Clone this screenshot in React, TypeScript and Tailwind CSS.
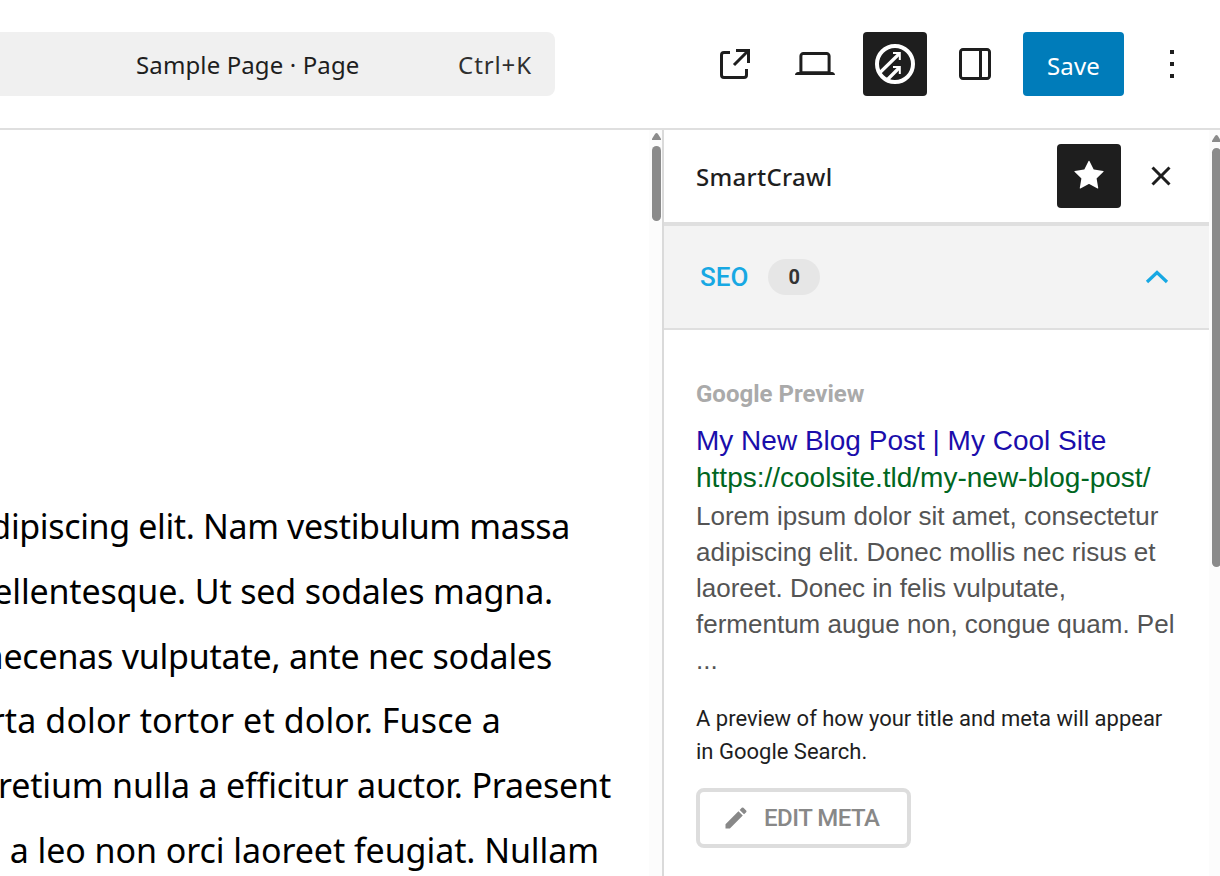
import type {FC, ReactNode} from "react";
import {clsx} from "clsx";

interface IIconProps {
    path: string;
}

const icons = {
    external: "M19.5 4.5h-7V6h4.44l-5.97 5.97 1.06 1.06L18 7.06v4.44h1.5v-7Zm-13 1a2 2 0 0 0-2 2v10a2 2 0 0 0 2 2h10a2 2 0 0 0 2-2v-3H17v3a.5.5 0 0 1-.5.5h-10a.5.5 0 0 1-.5-.5v-10a.5.5 0 0 1 .5-.5h3V5.5h-3Z",
    desktop: "M20.5 16h-.7V8c0-1.1-.9-2-2-2H6.2c-1.1 0-2 .9-2 2v8h-.7c-.8 0-1.5.7-1.5 1.5h20c0-.8-.7-1.5-1.5-1.5zM5.7 8c0-.3.2-.5.5-.5h11.6c.3 0 .5.2.5.5v7.6H5.7V8z",
    drawer: "M18 4H6c-1.1 0-2 .9-2 2v12c0 1.1.9 2 2 2h12c1.1 0 2-.9 2-2V6c0-1.1-.9-2-2-2zm-4 14.5H6c-.3 0-.5-.2-.5-.5V6c0-.3.2-.5.5-.5h8v13zm4.5-.5c0 .3-.2.5-.5.5h-2.5v-13H18c.3 0 .5.2.5.5v12z",
    more: "M13 19h-2v-2h2v2zm0-6h-2v-2h2v2zm0-6h-2V5h2v2z",
    star: "M11.776 4.454a.25.25 0 01.448 0l2.069 4.192a.25.25 0 00.188.137l4.626.672a.25.25 0 01.139.426l-3.348 3.263a.25.25 0 00-.072.222l.79 4.607a.25.25 0 01-.362.263l-4.138-2.175a.25.25 0 00-.232 0l-4.138 2.175a.25.25 0 01-.363-.263l.79-4.607a.25.25 0 00-.071-.222L4.754 9.881a.25.25 0 01.139-.426l4.626-.672a.25.25 0 00.188-.137l2.069-4.192z",
    close: "M12 13.06l3.712 3.713 1.061-1.06L13.061 12l3.712-3.712-1.06-1.06L12 10.938 8.288 7.227l-1.061 1.06L10.939 12l-3.712 3.712 1.06 1.061L12 13.061z",
    pencil: "M3 17.25V21h3.75L17.81 9.94l-3.75-3.75L3 17.25zM20.71 7.04a1 1 0 0 0 0-1.41l-2.34-2.34a1 1 0 0 0-1.41 0l-1.83 1.83 3.75 3.75 1.83-1.83z",
};

const Icon: FC<IIconProps> = ({path}) => {
    return <svg viewBox="0 0 24 24" className="size-12 shrink-0" fill="currentColor">
        <path d={path}/>
    </svg>;
};

const SmartCrawlIcon: FC = () => {
    return <svg viewBox="0 0 40 40" className="size-10" fill="none" stroke="currentColor">
        <circle cx="20" cy="20" r="18" strokeWidth="4"/>
        <path d="M5 28.5 24 10M12 36 24 24" strokeWidth="3.2"/>
        <path d="M18 9H24.8V16M18 23H24.8V30" strokeWidth="2"/>
    </svg>;
};

const IconButton: FC<{active?: boolean; children: ReactNode}> = ({active, children}) => {
    return <button className={clsx("flex size-16 items-center justify-center rounded-[4px]", active ? "bg-[#1e1e1e] text-white" : "text-[#1e1e1e]")}>
        {children}
    </button>;
};

const Arrow: FC = () => {
    return <svg viewBox="0 0 9 7" className="h-[7px] w-[9px] shrink-0" fill="#8b8b8b">
        <path d="M0 7V5.8L3.2.8Q4.5-.8 5.8.8L9 5.8V7Z"/>
    </svg>;
};

const lines = [
    {text: "dipiscing elit. Nam vestibulum massa", style: "w-[570px] tracking-[-0.36px]"},
    {text: "ellentesque. Ut sed sodales magna.", style: "w-[553px] tracking-[-0.18px]"},
    {text: "aecenas vulputate, ante nec sodales", style: "w-[552px] tracking-[-0.23px]"},
    {text: "rta dolor tortor et dolor. Fusce a", style: "w-[501px] tracking-[0.11px]"},
    {text: "retium nulla a efficitur auctor. Praesent", style: "w-[611px] tracking-[-0.17px]"},
    {text: "a leo non orci laoreet feugiat. Nullam", style: "w-[599px] tracking-[-0.07px]"},
];

const Header: FC = () => {
    return <header className="flex h-[130px] shrink-0 border-b-2 border-[#dfdfdf] pt-8 text-[#1e1e1e]">
        <div className="flex h-16 w-[555px] items-center justify-between rounded-r-lg bg-[#f0f0f0] pt-0.5 pr-[23px] pl-[136px] text-[24px] whitespace-nowrap">
            <span className="tracking-[0.12px]">Sample Page · Page</span>
            <span className="tracking-[0.9px] text-[#2f2f2f]">Ctrl+K</span>
        </div>
        <div className="ml-[148px] flex gap-4">
            <IconButton><Icon path={icons.external}/></IconButton>
            <IconButton><Icon path={icons.desktop}/></IconButton>
            <IconButton active><SmartCrawlIcon/></IconButton>
            <IconButton><Icon path={icons.drawer}/></IconButton>
            <button className="h-16 w-[101px] rounded-[4px] bg-[#007cba] pt-1 text-[24px] tracking-[0.2px] text-white">Save</button>
            <IconButton><Icon path={icons.more}/></IconButton>
        </div>
    </header>;
};

const Editor: FC = () => {
    return <main className="flex w-[662px] shrink-0 overflow-hidden">
        <div className="w-[649px] pt-[364px] text-[34px] leading-[64.8px] text-black">
            {lines.map(({text, style}) => <p key={text} className={clsx("flex justify-end whitespace-nowrap", style)}>{text}</p>)}
        </div>
        <div className="flex w-[13px] flex-col bg-[#fcfcfc] pt-[3px] pl-[3px]">
            <Arrow/>
            <div className="mt-1.5 h-[75px] w-[9px] rounded-full bg-[#8b8b8b]"/>
        </div>
    </main>;
};

const Preview: FC = () => {
    return <section className="pt-[46px] pl-8 font-[Roboto,sans-serif] whitespace-nowrap">
        <h3 className="text-[24px] leading-9 font-bold text-[#aaa]">Google Preview</h3>
        <div className="mt-2.5 font-['Liberation_Sans',Arial,sans-serif]">
            <p className="text-[28px] leading-[38px] text-[#1a0dab]">My New Blog Post | My Cool Site</p>
            <p className="text-[28px] leading-[36px] text-[#006621]">https://coolsite.tld/my-new-blog-post/</p>
            <p className="mt-0.5 text-[26px] leading-9 text-[#545454]">
                Lorem ipsum dolor sit amet, consectetur<br/>
                adipiscing elit. Donec mollis nec risus et<br/>
                laoreet. Donec in felis vulputate,<br/>
                fermentum augue non, congue quam. Pel<br/>
                ...
            </p>
        </div>
        <p className="mt-6 text-[22px] leading-[33px] text-[#1e1e1e]">
            A preview of how your title and meta will appear<br/>
            in Google Search.
        </p>
        <button className="mt-5 flex h-[60px] w-[215px] items-center rounded-lg border-4 border-[#ddd] pl-[22px] text-[24px] font-medium text-[#888]">
            <svg viewBox="0 0 24 24" className="size-7" fill="currentColor"><path d={icons.pencil}/></svg>
            <span className="ml-3.5 tracking-[-0.5px]">EDIT META</span>
        </button>
    </section>;
};

const Sidebar: FC = () => {
    return <aside className="flex w-[558px] border-l-2 border-[#dadada]">
        <div className="w-[545px] shrink-0">
            <div className="flex h-24 items-center justify-between border-b-4 border-[#dfdfdf] pr-4 pl-8">
                <h2 className="pt-0.5 text-[24px] font-medium tracking-[0.3px] text-[#1e1e1e]">SmartCrawl</h2>
                <div className="flex gap-2">
                    <IconButton active><Icon path={icons.star}/></IconButton>
                    <IconButton><Icon path={icons.close}/></IconButton>
                </div>
            </div>
            <div className="flex h-[104px] items-center border-b-2 border-[#dfdfdf] bg-[#f3f3f3] pr-10 pl-9 font-[Roboto,sans-serif]">
                <span className="text-[26px] font-medium text-[#17a8e3]">SEO</span>
                <span className="ml-5 flex h-9 w-[52px] items-center justify-center rounded-full bg-[#e6e6e6] text-[20px] font-bold text-[#333]">0</span>
                <svg viewBox="0 0 24 14" className="ml-auto h-3.5 w-6" fill="none" stroke="#17a8e3" strokeWidth="3.2">
                    <path d="M2 12 12 2.5 22 12"/>
                </svg>
            </div>
            <Preview/>
        </div>
        <div className="flex grow flex-col overflow-hidden bg-[#fcfcfc] pt-[5px] pl-[3px]">
            <Arrow/>
            <div className="mt-1.5 h-[419px] w-[9px] shrink-0 rounded-full bg-[#8b8b8b]"/>
        </div>
    </aside>;
};

export default function App() {
    return <div className="flex h-[876px] w-[1220px] flex-col overflow-hidden bg-white font-['Noto_Sans',sans-serif]">
        <Header/>
        <div className="flex min-h-0 grow">
            <Editor/>
            <Sidebar/>
        </div>
    </div>;
}
